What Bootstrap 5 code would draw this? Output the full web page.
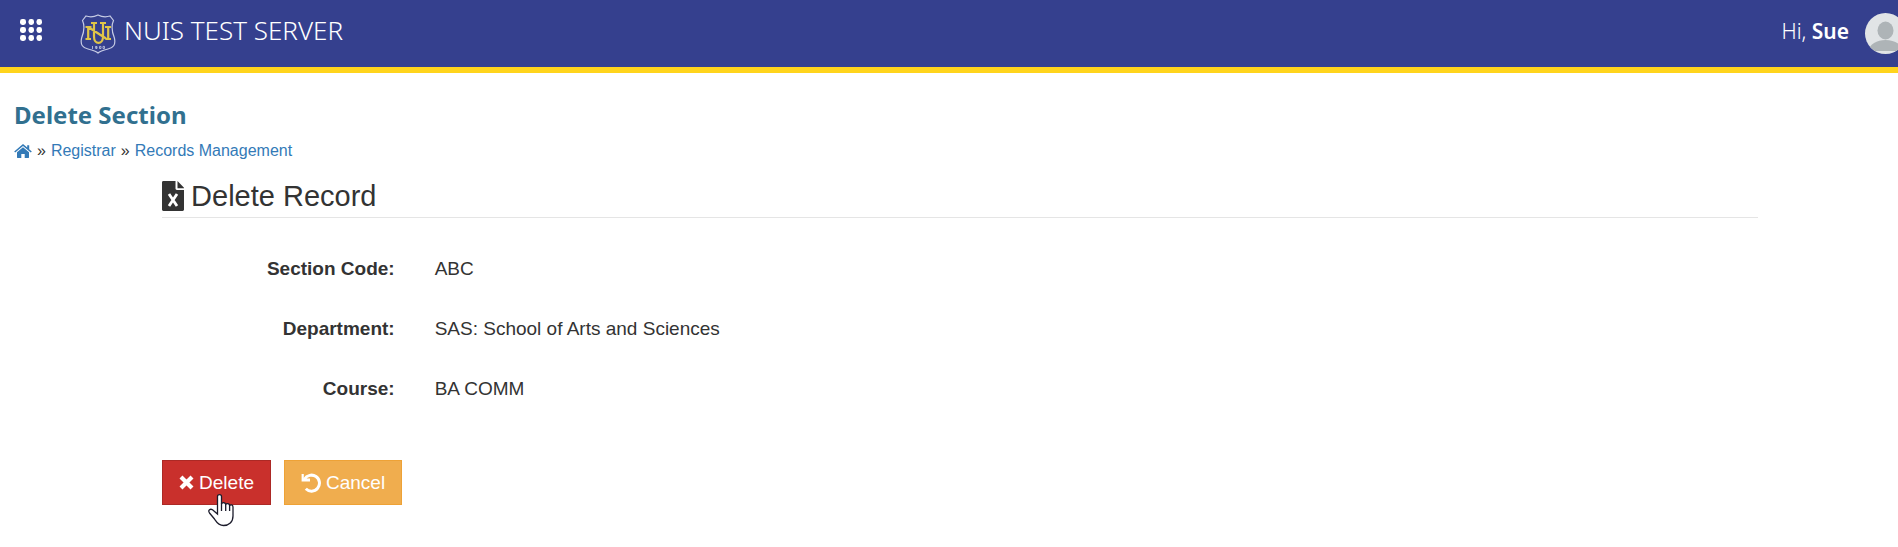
<!DOCTYPE html>
<html lang="en">
<head>
<meta charset="utf-8">
<meta name="viewport" content="width=device-width, initial-scale=1">
<title>Delete Section</title>
<link href="https://cdn.jsdelivr.net/npm/bootstrap@5.3.0/dist/css/bootstrap.min.css" rel="stylesheet">
<style>
body { font-family: "Liberation Sans", Arial, sans-serif; font-size: 16px; line-height: 24px; color: #333; }
.topbar { background: #35408e; border-bottom: 6px solid #ffd41c; height: 73px; padding: 0 0 0 20px; color: #fff; font-family: "Noto Sans", "Open Sans", sans-serif; }
.app-menu { width: 22px; height: 22px; margin-bottom: 8px; }
.brand-link { margin-left: 38px; gap: 8px; color: #fff; font-weight: 300; font-size: 26px; line-height: 34px; }
.brand-name { margin-bottom: 8px; }
.greeting { font-size: 21px; line-height: 30px; font-weight: 300; margin-bottom: 6px; }
.greeting strong { font-weight: 600; }
.avatar { margin-right: -8px; }
.page-head { padding: 24px 14px 0; }
.page-title { font: 700 24px/36px "Noto Sans", "Open Sans", sans-serif; color: #31708f; margin: 0 0 6px; }
.crumbs { gap: 5px; }
.crumbs a { color: #337ab7; }
.record { margin: 13px 7.4% 0 8.54%; padding-bottom: 40px; }
.record-title { font-size: 29px; line-height: 40px; border-bottom: 1px solid #e5e5e5; gap: 7px; padding-bottom: 1px; margin-bottom: 36px; font-weight: 400; }
.details { --bs-gutter-x: 40px; font-size: 19px; line-height: 30px; margin-bottom: 26px; }
.details dt, .details dd { margin-bottom: 30px; }
.actions { gap: 13px; }
.action { border-radius: 0; font-size: 19px; line-height: 27px; padding: 8px 16px; color: #fff; gap: 5px; }
.action-delete, .action-delete:hover { background: #c9302c; border-color: #ac2925; color: #fff; }
.action-cancel, .action-cancel:hover { background: #f0ad4e; border-color: #eea236; color: #fff; }
.pointer { left: 46px; top: 33px; z-index: 2; pointer-events: none; }
</style>
</head>
<body>
<header class="topbar d-flex align-items-center overflow-hidden">
  <button type="button" class="app-menu btn p-0 border-0 d-flex" aria-label="Applications">
    <svg width="22" height="22" viewBox="0 0 22 22" fill="#fff"><g id="dots"><rect width="6" height="6" rx="2.4"/><rect x="8.5" width="5.5" height="6" rx="2.4"/><rect x="16.5" width="5.5" height="6" rx="2.4"/></g><use href="#dots" y="8"/><use href="#dots" y="16"/></svg>
  </button>
  <a href="#" class="brand-link d-flex align-items-center text-decoration-none">
    <svg width="36" height="40" viewBox="0 0 36 40" fill="none">
      <path d="M18 1C14 3 9 3 6 2L2.500 6.500C5 12 4 18 1.600 24C0 31 3 34 8 35C12 36 16 37 18 39C20 37 24 36 28 35C33 34 36 31 34.400 24C32 18 31 12 33.500 6.500L30 2C27 3 22 3 18 1Z" stroke="#c6cbe4" stroke-width="1.200"/>
      <path d="M5.500 13h6M5.500 25h5.500M8.200 13v12M9 13.500l17 11M25 13h6M25.500 25h5.500M28.200 13v12M11 9h6M20 9h6M14 9v13.500c0 8.500 9 8.500 9 0V9" stroke="#e0c548" stroke-width="2.200"/>
      <path d="M12.500 32v3M15.500 34.500H17v-2h-1.500v1.200H17M19.500 32.400H21v2.100h-1.500zM23 32.400h1.500v2.100H23z" stroke="#c6cbe4" stroke-width=".8"/>
    </svg>
    <span class="brand-name">NUIS TEST SERVER</span>
  </a>
  <div class="ms-auto d-flex align-items-center gap-3">
    <span class="greeting">Hi, <strong>Sue</strong></span>
    <svg class="avatar" width="41" height="41" viewBox="0 0 41 41" role="img" aria-label="Sue"><defs><clipPath id="face"><circle cx="20.500" cy="20.500" r="20.500"/></clipPath></defs><g clip-path="url(#face)"><path fill="#e1e4e6" d="M0 0h41v41H0z"/><ellipse cx="20.500" cy="17.500" rx="8" ry="9" fill="#aeb4b7"/><path fill="#aeb4b7" d="M4 38c0-7 8-11 16.500-11S37 31 37 38z"/></g></svg>
  </div>
</header>
<main>
  <div class="page-head">
    <h1 class="page-title">Delete Section</h1>
    <nav class="crumbs d-flex" aria-label="Breadcrumb">
      <a href="#" aria-label="Home" class="d-flex align-items-center"><svg width="18" height="16" viewBox="0 0 18 16" fill="#337ab7"><path d="M9 4.300 3 9.300V14.500c0 .3.200.5.500.5H7.300V11h3.400v4h3.800c.3 0 .5-.2.500-.5V9.300z"/><path d="M9 1 .2 8.400l1 1.200L9 3.100l7.800 6.500 1-1.200-2.600-2.200V2.200h-2v2.300z"/></svg></a>
      <span>»</span><a href="#" class="text-decoration-none">Registrar</a>
      <span>»</span><a href="#" class="text-decoration-none">Records Management</a>
    </nav>
  </div>
  <section class="record">
    <h2 class="record-title d-flex align-items-center">
      <svg width="22" height="30" viewBox="0 0 22 30"><path fill="#333" d="M1.400 0H13.500V7.500c0 .8.600 1.400 1.400 1.400H22V28.600c0 .8-.6 1.400-1.400 1.400H1.400C.6 30 0 29.400 0 28.600V1.400C0 .6.600 0 1.400 0zM15.500 0l6.500 6.700v.5h-6.500z"/><path stroke="#fff" stroke-width="2.800" d="M7 13l8 12M15 13l-8 12"/></svg>
      <span>Delete Record</span>
    </h2>
    <dl class="details row">
      <dt class="col-2 text-end">Section Code:</dt><dd class="col-10">ABC</dd>
      <dt class="col-2 text-end">Department:</dt><dd class="col-10">SAS: School of Arts and Sciences</dd>
      <dt class="col-2 text-end">Course:</dt><dd class="col-10">BA COMM</dd>
    </dl>
    <div class="actions d-flex">
      <div class="position-relative">
        <button type="button" class="btn action action-delete d-flex align-items-center">
          <svg width="15" height="15" viewBox="0 0 15 15" stroke="#fff" stroke-width="4.200"><path d="M2 2l11 11M13 2L2 13"/></svg>Delete
        </button>
        <svg class="pointer position-absolute" width="26" height="34" viewBox="0 0 26 34"><path d="M9.500 21V3.500C9.500 1 13.500 1 13.500 3.500V11c1-2 4-1.500 4.200.5 1-1.500 3.800-1 3.900 1 1-1.200 3.400-.7 3.400 1.500V23c0 6-4 9.500-9.500 9.500-5 0-7-3.500-9-6.500l-5-6c-2-3 1-4.500 3-3.200z" fill="#fff" stroke="#1b1b2b" stroke-width="1.300"/><path d="M13.500 10.500V18M17.700 11.500V18M21.600 12.500V18" stroke="#1b1b2b" stroke-width="1.300"/></svg>
      </div>
      <button type="button" class="btn action action-cancel d-flex align-items-center">
        <svg width="20" height="20" viewBox="0 0 20 20"><path d="M3.500 6.200A8 8 0 1 1 4.800 15.800" fill="none" stroke="#fff" stroke-width="3"/><path fill="#fff" d="M.6 1h2.200v4.600H9V8.500H.6z"/></svg>Cancel
      </button>
    </div>
  </section>
</main>
<script src="https://cdn.jsdelivr.net/npm/bootstrap@5.3.0/dist/js/bootstrap.bundle.min.js"></script>
</body>
</html>
